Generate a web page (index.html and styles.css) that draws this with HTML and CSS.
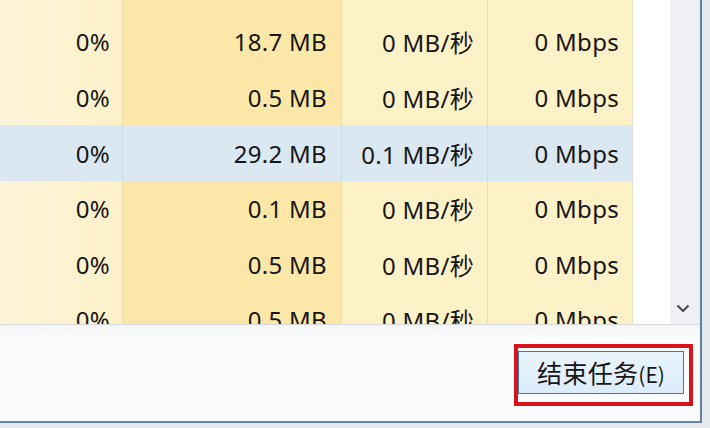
FILE: index.html
```html
<!DOCTYPE html>
<html lang="zh-CN">
<head>
<meta charset="utf-8">
<title>任务管理器</title>
<link rel="stylesheet" href="styles.css">
</head>
<body>
<div class="screen">
  <div class="window">
    <div class="list">
      <div class="table">
        <div class="row top"><div class="cell c1"></div><div class="cell c2"></div><div class="cell c3"></div><div class="cell c4"></div></div>
        <div class="row"><div class="cell c1">0%</div><div class="cell c2">18.7 MB</div><div class="cell c3">0 MB/秒</div><div class="cell c4">0 Mbps</div></div>
        <div class="row"><div class="cell c1">0%</div><div class="cell c2">0.5 MB</div><div class="cell c3">0 MB/秒</div><div class="cell c4">0 Mbps</div></div>
        <div class="row sel"><div class="cell c1">0%</div><div class="cell c2">29.2 MB</div><div class="cell c3">0.1 MB/秒</div><div class="cell c4">0 Mbps</div></div>
        <div class="row"><div class="cell c1">0%</div><div class="cell c2">0.1 MB</div><div class="cell c3">0 MB/秒</div><div class="cell c4">0 Mbps</div></div>
        <div class="row"><div class="cell c1">0%</div><div class="cell c2">0.5 MB</div><div class="cell c3">0 MB/秒</div><div class="cell c4">0 Mbps</div></div>
        <div class="row"><div class="cell c1">0%</div><div class="cell c2">0.5 MB</div><div class="cell c3">0 MB/秒</div><div class="cell c4">0 Mbps</div></div>
      </div>
      <div class="gap"></div>
      <div class="scrollbar">
        <svg class="chev" width="14" height="9" viewBox="0 0 14 9"><path d="M1.5 1.5 L7 7 L12.5 1.5" fill="none" stroke="#4a4a4a" stroke-width="2"/></svg>
      </div>
    </div>
    <div class="footer">
      <div class="highlight">
        <button class="btn">结束任务<span class="key">(E)</span></button>
      </div>
    </div>
  </div>
</div>
</body>
</html>
```
FILE: styles.css
```css
html, body {
  margin: 0;
  padding: 0;
}
body {
  width: 710px;
  height: 428px;
  overflow: hidden;
  background: #e6eaef;
  font-family: "Noto Sans", "Noto Sans CJK SC", sans-serif;
}
.screen {
  width: 710px;
  height: 428px;
}
.window {
  width: 700px;
  height: 421px;
  border-right: 2px solid #5d81a4;
  border-bottom: 2px solid #6487a8;
  display: flex;
  flex-direction: column;
  background: #fafbfd;
}
.list {
  height: 324px;
  display: flex;
  border-bottom: 1px solid #d6d8dc;
  background: #ffffff;
  overflow: hidden;
}
.table {
  width: 633px;
  display: flex;
  flex-direction: column;
  flex: none;
}
.row {
  display: grid;
  grid-template-columns: 123px 219px 146px 145px;
  height: 55.6px;
  flex: none;
}
.row.top {
  height: 14.2px;
}
.cell {
  display: flex;
  align-items: center;
  justify-content: flex-end;
  font-size: 24px;
  letter-spacing: 0.3px;
  color: #161616;
  white-space: nowrap;
  border-right: 1px solid #efdca2;
}
.c1 {
  padding-right: 12px;
  background: linear-gradient(to right, #fdf5da, #fdf1c9);
}
.c2 {
  padding-right: 14px;
  background: #fce7a9;
}
.c3 {
  padding-right: 13px;
  background: #fdf1c7;
}
.c4 {
  padding-right: 13px;
  background: #fdf1c7;
  border-right-color: #ece3c6;
}
.row.sel .cell {
  background: #dbe8f1;
  border-right-color: #d0dde7;
}
.gap {
  width: 37px;
  flex: none;
  background: #ffffff;
}
.scrollbar {
  width: 30px;
  flex: none;
  background: #f0f1f4;
  display: flex;
  align-items: flex-end;
  justify-content: center;
  padding-bottom: 11px;
  box-sizing: border-box;
}
.chev {
  display: block;
  margin-right: 5px;
}
.footer {
  flex: 1;
  display: flex;
  justify-content: flex-end;
  align-items: flex-start;
  padding-top: 19px;
  padding-right: 7px;
  background: linear-gradient(#f5f6f8, #fafbfd 12px);
}
.highlight {
  border: 4px solid #d8131c;
  padding: 3px 5px 8px 0;
}
.btn {
  display: block;
  width: 166px;
  height: 43px;
  margin: 0;
  padding: 0 0 2px 0;
  border: 1px solid #3f7aa8;
  background: linear-gradient(#eaf4fc, #dcecfb);
  font-family: "Noto Sans CJK SC", "Noto Sans", sans-serif;
  font-size: 25px;
  color: #161616;
  letter-spacing: 0.3px;
}
.key {
  font-size: 21px;
  letter-spacing: 0;
}
```
